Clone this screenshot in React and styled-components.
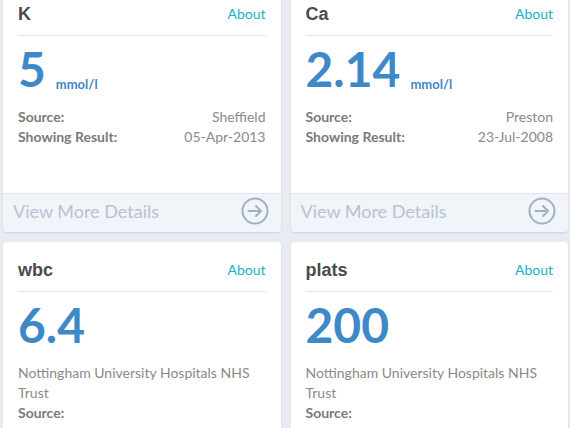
import React from "react";
import styled, { createGlobalStyle } from "styled-components";

const GlobalStyle = createGlobalStyle`
    html, body {
        margin: 0;
        padding: 0;
        background: #e8ecf2;
        font-family: Lato, "Open Sans", sans-serif;
    }
`;

const results = [
    {
        name: "K",
        value: "5",
        unit: "mmol/l",
        rows: [
            ["Source:", "Sheffield"],
            ["Showing Result:", "05-Apr-2013"],
        ],
    },
    {
        name: "Ca",
        value: "2.14",
        unit: "mmol/l",
        rows: [
            ["Source:", "Preston"],
            ["Showing Result:", "23-Jul-2008"],
        ],
    },
    {
        name: "wbc",
        value: "6.4",
        place: "Nottingham University Hospitals NHS Trust",
        rows: [
            ["Source:", ""],
            ["Showing Result:", "14-Mar-2014"],
        ],
    },
    {
        name: "plats",
        value: "200",
        place: "Nottingham University Hospitals NHS Trust",
        rows: [
            ["Source:", ""],
            ["Showing Result:", "14-Mar-2014"],
        ],
    },
];

const Grid = styled.div`
    display: grid;
    grid-template-columns: 1fr 1fr;
    gap: 10px;
    padding: 0 2px 20px 3px;
    margin-top: -14px;
`;

const Card = styled.div`
    display: flex;
    flex-direction: column;
    min-height: 246px;
    background: #ffffff;
    border-radius: 4px;
    box-shadow: 0 1px 2px rgba(120, 135, 160, 0.25);
    overflow: hidden;
`;

const Header = styled.div`
    display: flex;
    justify-content: space-between;
    align-items: center;
    margin: 0 15px;
    padding: 18px 0 11px;
    border-bottom: 1px solid #e4e7eb;
    line-height: 20px;
`;

const Title = styled.h3`
    margin: 0;
    font-family: "Liberation Sans", Arial, sans-serif;
    font-weight: 700;
    font-size: 18px;
    color: #4a4a4a;
`;

const About = styled.a`
    font-size: 14px;
    color: #17b0c8;
    text-decoration: none;
`;

const Body = styled.div`
    padding: 9px 15px 0;
`;

const Reading = styled.div`
    display: flex;
    align-items: baseline;
    gap: 10px;
`;

const Value = styled.span`
    font-size: 48px;
    font-weight: 700;
    line-height: 1;
    color: #3f88c8;
`;

const Unit = styled.span`
    font-size: 13px;
    font-weight: 700;
    color: #3f88c8;
    position: relative;
    top: 2px;
`;

const Details = styled.div`
    margin-top: 14px;
    font-size: 14px;
    line-height: 20px;
    color: #8a8a8a;
`;

const Row = styled.div`
    display: flex;
    justify-content: space-between;
`;

const Label = styled.span`
    font-weight: 700;
    color: #7a7a7a;
`;

const Footer = styled.div`
    margin-top: auto;
    height: 39px;
    display: flex;
    align-items: center;
    justify-content: space-between;
    padding: 0 12px 4px 10px;
    box-sizing: border-box;
    background: #f1f4f8;
    border-top: 1px solid #e2e6ec;
    font-size: 18px;
    color: #b7c3d3;
`;

const ArrowIcon = () => (
    <svg width="28" height="28" viewBox="0 0 28 28" fill="none">
        <circle cx="14" cy="14" r="12.5" stroke="#a3afc3" strokeWidth="2" />
        <path
            d="M7.5 14h12.5M15 9l5 5-5 5"
            stroke="#a3afc3"
            strokeWidth="2"
            strokeLinecap="round"
            strokeLinejoin="round"
        />
    </svg>
);

const ResultCard = ({ result }) => (
    <Card>
        <Header>
            <Title>{result.name}</Title>
            <About href="#">About</About>
        </Header>
        <Body>
            <Reading>
                <Value>{result.value}</Value>
                {result.unit && <Unit>{result.unit}</Unit>}
            </Reading>
            <Details>
                {result.place && <div>{result.place}</div>}
                {result.rows.map(([label, val]) => (
                    <Row key={label}>
                        <Label>{label}</Label>
                        <span>{val}</span>
                    </Row>
                ))}
            </Details>
        </Body>
        <Footer>
            <span>View More Details</span>
            <ArrowIcon />
        </Footer>
    </Card>
);

const App = () => (
    <>
        <GlobalStyle />
        <Grid>
            {results.map((r) => (
                <ResultCard key={r.name} result={r} />
            ))}
        </Grid>
    </>
);

export default App;
